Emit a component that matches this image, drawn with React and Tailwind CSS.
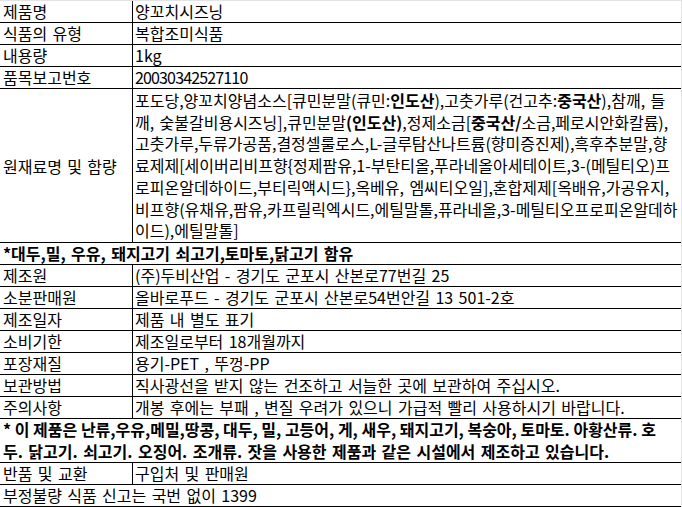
import React from "react";

const rows = [
  ["제품명", "양꼬치시즈닝"],
  ["식품의 유형", "복합조미식품"],
  ["내용량", "1kg"],
  ["품목보고번호", <span className="tracking-[-0.85px]">20030342527110</span>],
];

const rows2 = [
  ["제조원", "(주)두비산업 - 경기도 군포시 산본로77번길 25"],
  ["소분판매원", "올바로푸드 - 경기도 군포시 산본로54번안길 13 501-2호"],
  ["제조일자", "제품 내 별도 표기"],
  ["소비기한", "제조일로부터 18개월까지"],
  ["포장재질", "용기-PET , 뚜껑-PP"],
  ["보관방법", "직사광선을 받지 않는 건조하고 서늘한 곳에 보관하여 주십시오."],
  ["주의사항", "개봉 후에는 부패 , 변질 우려가 있으니 가급적 빨리 사용하시기 바랍니다."],
];

const Row = ({ label, children }) => (
  <div className="flex h-[22px] border-b border-black leading-[21px]">
    <div className="w-[133px] shrink-0 border-r border-black pl-[3px] whitespace-nowrap">{label}</div>
    <div className="flex-1 pl-[2px] whitespace-nowrap">{children}</div>
  </div>
);

const B = ({ children }) => <b className="font-bold">{children}</b>;

export default function App() {
  return (
    <div
      className="w-[682px] h-[507px] bg-white text-black text-[16px] [word-spacing:1.8px] border-t border-r border-[#e3e3e3] overflow-hidden"
      style={{ fontFamily: '"Noto Sans CJK KR", "Noto Sans", sans-serif' }}
    >
      <div className="border-r border-black -mr-px">
        {rows.map(([l, v]) => (
          <Row key={l} label={l}>{v}</Row>
        ))}

        <div className="flex h-[154px] border-b border-black">
          <div className="w-[133px] shrink-0 border-r border-black pl-[3px] flex items-center whitespace-nowrap">
            원재료명 및 함량
          </div>
          <div className="flex-1 pl-[2px] pt-px leading-[21.7px] whitespace-nowrap">
            포도당,양꼬치양념소스[큐민분말(큐민:<B>인도산</B>),고춧가루(건고추:<B>중국산</B>),참깨, 들
            <br />
            깨, 숯불갈비용시즈닝],큐민분말<B>(인도산)</B>,정제소금[<B>중국산/</B>소금,페로시안화칼륨),
            <br />
            고춧가루,두류가공품,결정셀룰로스,L-글루탐산나트륨(향미증진제),흑후추분말,향
            <br />
            료제제[세이버리비프향{"{"}정제팜유,1-부탄티올,푸라네올아세테이트,3-(메틸티오)프
            <br />
            로피온알데하이드,부티릭액시드{"}"},옥베유, 엠씨티오일],혼합제제[옥배유,가공유지,
            <br />
            비프향(유채유,팜유,카프릴릭엑시드,에틸말톨,퓨라네올,3-메틸티오프로피온알데하
            <br />
            이드),에틸말톨]
          </div>
        </div>

        <div className="h-[22px] border-b border-black leading-[21px] pl-[3px] font-bold whitespace-nowrap">
          *대두,밀, 우유, 돼지고기 쇠고기,토마토,닭고기 함유
        </div>

        {rows2.map(([l, v]) => (
          <Row key={l} label={l}>{v}</Row>
        ))}

        <div className="h-[44px] border-b border-black leading-[21.5px] pl-[3px] font-bold whitespace-nowrap">
          <span className="[word-spacing:0px]">
            * 이 제품은 난류,우유,메밀,땅콩, 대두, 밀, 고등어, 게, 새우, 돼지고기, 복숭아, 토마토. 아황산류. 호
          </span>
          <br />
          두. 닭고기. 쇠고기. 오징어. 조개류. 잣을 사용한 제품과 같은 시설에서 제조하고 있습니다.
        </div>

        <Row label="반품 및 교환">구입처 및 판매원</Row>

        <div className="h-[22px] border-b border-black leading-[21px] pl-[3px] whitespace-nowrap">
          부정불량 식품 신고는 국번 없이 1399
        </div>
      </div>
    </div>
  );
}
